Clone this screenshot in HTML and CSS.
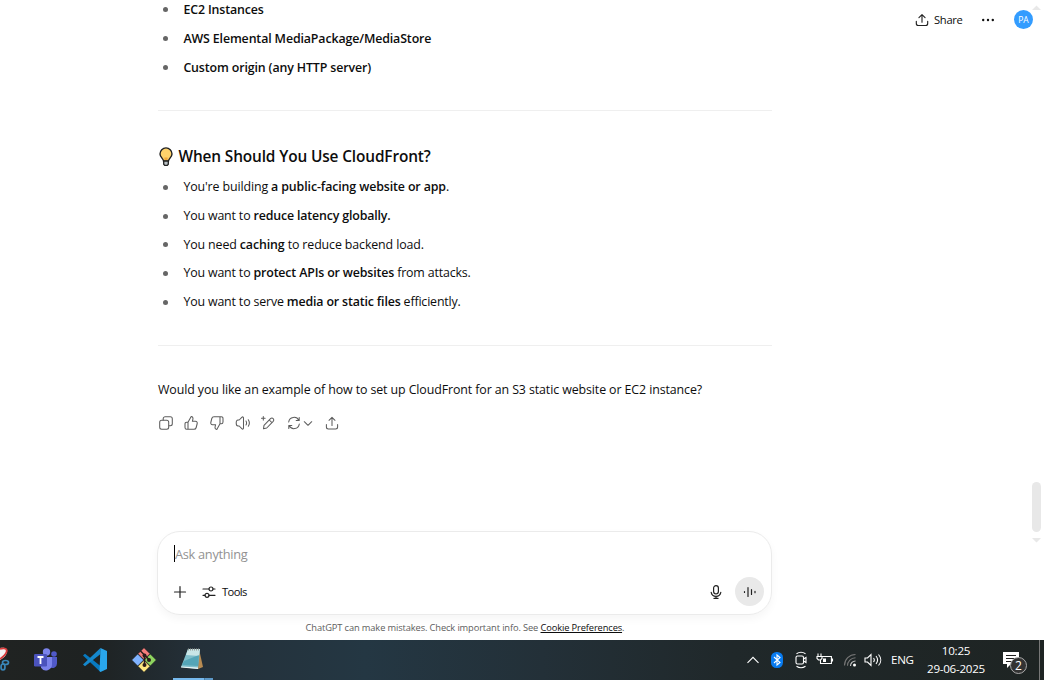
FILE: index.html
```html
<!DOCTYPE html>
<html lang="en">
<head>
<meta charset="utf-8">
<title>CloudFront</title>
<link rel="stylesheet" href="styles.css">
</head>
<body>
<div class="screen">
  <div class="page">
    <main class="thread">
      <ul class="list origins">
        <li><b>EC2 Instances</b></li>
        <li><b>AWS Elemental MediaPackage/MediaStore</b></li>
        <li><b>Custom origin (any HTTP server)</b></li>
      </ul>
      <hr class="rule">
      <h3 class="heading">
        <svg class="bulb" width="16" height="20" viewBox="0 0 16 20"><path d="M5.6 14.3C5.5 11.7 2 10.3 2 6.9a6 6 0 0 1 12 0c0 3.4-3.5 4.8-3.6 7.4z" fill="#ffd36b" stroke="#222" stroke-width="1.4"/><path d="M5.7 14h4.600v3.300L9.300 18.400H6.700L5.700 17.300z" fill="#b9c0c4" stroke="#222" stroke-width="1.300"/><path d="M6.400 10.500h3.200V13H6.400z" fill="#f2a93b"/></svg>
        <span>When Should You Use CloudFront?</span>
      </h3>
      <ul class="list uses">
        <li><span class="wide">You're building <b>a public-facing website or app</b>.</span></li>
        <li><span>You want to <b>reduce latency globally.</b></span></li>
        <li><span class="wide">You need <b>caching</b> to reduce backend load.</span></li>
        <li><span>You want to <b>protect APIs or websites</b> from attacks.</span></li>
        <li><span>You want to serve <b>media or static files</b> efficiently.</span></li>
      </ul>
      <hr class="rule">
      <p class="question">Would you like an example of how to set up CloudFront for an S3 static website or EC2 instance?</p>
      <div class="actions">
        <svg width="16" height="16" viewBox="0 0 16 16"><rect x="1.700" y="5.200" width="9" height="9" rx="2"/><path d="M5.200 5V3.700a2 2 0 0 1 2-2h5.100a2 2 0 0 1 2 2v5a2 2 0 0 1-2 2H11"/></svg>
        <svg class="like" width="16" height="16" viewBox="0 0 16 16"><path d="M5 7.200 8.200 1.600c1.600.2 2 1.300 1.700 2.500L9.400 6.300h3.100c1.300 0 2 1 1.700 2.200l-1 4c-.3 1.200-1 1.800-2.200 1.800H5zM5 7.200H3.700c-1.200 0-1.700.6-1.700 1.700v3.700c0 1.100.6 1.700 1.700 1.700H5"/></svg>
        <svg width="16" height="16" viewBox="0 0 16 16"><path d="M11 8.800 7.800 14.400c-1.600-.2-2-1.300-1.700-2.500l.5-2.200H3.500c-1.300 0-2-1-1.700-2.200l1-4c.3-1.200 1-1.800 2.200-1.800h6zM11 8.800h1.300c1.200 0 1.700-.6 1.700-1.700V3.400c0-1.100-.6-1.700-1.700-1.700H11"/></svg>
        <svg width="16" height="16" viewBox="0 0 16 16"><path d="M8.500 3v10c0 1.200-1 1.400-1.700.7L4.200 11H3c-1.200 0-1.800-.8-1.800-3S1.800 5 3 5h1.200l2.600-2.700c.7-.7 1.700-.5 1.700.7zM11 6c.7 1.200.7 2.800 0 4M13.300 4.700c1.300 2 1.300 4.600 0 6.600"/></svg>
        <svg width="16" height="16" viewBox="0 0 16 16"><path d="M3.500 13.800 4 10.300l6.500-6.600c.9-.9 2-.8 2.700-.1.800.8.800 1.800 0 2.700L6.700 13zM9.300 5l2.600 2.600M3.300 1.500v3.600M1.500 3.300h3.600"/></svg>
        <span class="retry"><svg width="16" height="16" viewBox="0 0 16 16"><path d="M2.700 7A5.400 5.400 0 0 1 12.900 5.400M13.200 2.500v3h-3M13.300 9A5.400 5.400 0 0 1 3.100 10.600M2.800 13.500v-3h3"/></svg><svg width="10" height="16" viewBox="0 0 10 16"><path d="m1.300 6.700 3.700 3.600 3.700-3.600"/></svg></span>
        <svg width="16" height="16" viewBox="0 0 16 16"><path d="M8 10.500V2.500M5 5.300 8 2.300l3 3M2.400 9.500V12c0 1.300.7 2 2 2h7.200c1.300 0 2-.7 2-2V9.500"/></svg>
      </div>
      <div class="composer">
        <div class="prompt"><i class="caret"></i>Ask anything</div>
        <div class="tools">
          <svg class="plus" width="14" height="14" viewBox="0 0 14 14"><path d="M7 1.500v11M1.500 7h11"/></svg>
          <svg class="sliders" width="14" height="14" viewBox="0 0 14 14"><path d="M1 4h6M11 4h2M1 10.300h2M7 10.300h6"/><circle cx="9" cy="4" r="2"/><circle cx="5" cy="10.300" r="2"/></svg>
          <span class="toolname">Tools</span>
          <svg class="mic" width="14" height="16" viewBox="0 0 14 16"><rect x="4.600" y="1.600" width="4.800" height="8.400" rx="2.400"/><path d="M2.200 8.300C2.700 11 4.500 12.300 7 12.300s4.300-1.300 4.800-4M7 12.300v2.100M5 14.400h4"/></svg>
          <span class="voice"><svg width="14" height="14" viewBox="0 0 14 14"><path d="M1.500 6.500v1M5 2.500v9M8.500 4.500v5M12 6.300v1.400"/></svg></span>
        </div>
      </div>
      <p class="note">ChatGPT can make mistakes. Check important info. See <u>Cookie Preferences</u>.</p>
    </main>
    <header class="topbar">
      <svg class="upload" width="14" height="14" viewBox="0 0 16 16"><path d="M8 10.500V2M4.500 5.200 8 1.900l3.500 3.300M1.500 9.500V12c0 1.600.7 2.300 2.300 2.300h8.400c1.600 0 2.300-.7 2.300-2.300V9.500"/></svg>
      <span class="share">Share</span>
      <svg class="dots" width="14" height="4" viewBox="0 0 14 4"><circle cx="2.200" cy="2" r="1.200"/><circle cx="7" cy="2" r="1.200"/><circle cx="11.800" cy="2" r="1.200"/></svg>
      <span class="avatar">PA</span>
    </header>
    <svg class="scrollbar" width="11" height="540" viewBox="0 0 11 540"><path d="m5.500 2.500 4.500 4.500H1zM1 535h9l-4.500 4.500z"/><rect x="1" y="479" width="9" height="50" rx="4.500"/></svg>
  </div>
  <footer class="taskbar">
    <div class="apps">
      <svg class="snip" width="10" height="26" viewBox="0 0 10 26"><path d="M0 1c5-1 8 1 7 4-.5 3-3 6-7 8z" fill="#f4f4f4"/><path d="M0 2c5-1.500 7.500 0 6.500 3S3 10 0 12" fill="none" stroke="#d83b3b" stroke-width="1.800"/><g fill="none" stroke="#3986b8" stroke-width="1.700"><ellipse cx="5.500" cy="15.500" rx="3" ry="2"/><ellipse cx="3" cy="20" rx="2" ry="3"/></g></svg>
      <svg class="teams" width="26" height="24" viewBox="0 0 26 24"><circle cx="21" cy="6" r="2.800" fill="#5059c9"/><circle cx="13.500" cy="4" r="3.700" fill="#7b83eb"/><path d="M17 9h7v6.500a4.500 4.500 0 0 1-7 3.800z" fill="#5059c9"/><path d="M8 9h11v7.500a6 6 0 0 1-11 3.200z" fill="#7b83eb"/><rect x="1" y="6" width="13" height="12.500" rx="1.200" fill="#4b53bc"/><path class="tee" d="M4.500 9h6M7.500 9v7"/></svg>
      <svg class="code" width="26" height="26" viewBox="0 0 26 26"><path d="M1 8.500 3 6.700 18.500 19v6z" fill="#0879bf"/><path d="M1 17.500 3 19.300 18.500 7V1z" fill="#1588cd"/><path d="M18.500 1 25 4v18l-6.500 3-1-1z" fill="#29a6ec"/></svg>
      <svg class="git" width="26" height="26" viewBox="0 0 26 26"><g stroke="#222" stroke-width=".6"><path d="m13 .7 6 6-6 6-6-6z" fill="#f67d7b"/><path d="m6.700 7 6 6-6 6-6-6z" fill="#80b3ff"/><path d="m19.300 7 6 6-6 6-6-6z" fill="#8dd35f"/><path d="m13 13.300 6 6-6 6-6-6z" fill="#ffe680"/></g><path d="m9.500 4 4 4v11M13.500 8l5 5" stroke="#2b1b1b" stroke-width="1.500" fill="none"/><g fill="#2b1b1b"><circle cx="13.500" cy="8.500" r="2"/><circle cx="18" cy="13" r="2"/><circle cx="13.500" cy="18" r="2"/></g></svg>
      <span class="active"><svg width="24" height="24" viewBox="0 0 24 24"><path d="m19 2 4 18-5 2z" fill="#b88b52"/><path d="M8 2h12l-2 20-17-2z" fill="#7fbecb"/><path d="M8 2h12l-1 7-13-1z" fill="#c9e6e7"/><path d="m4 14 15-6-1 11-16-1z" fill="#4a9fb1" opacity=".8"/><path d="m1 19.500 17 1V22L1 20.500z" fill="#eaf4f4"/><path d="M8 2.500h12" stroke="#969c98" stroke-width="2" stroke-dasharray="1 1"/></svg></span><i class="group"></i>
    </div>
    <div class="tray">
      <svg width="14" height="10" viewBox="0 0 14 10"><path d="m1.500 7.800 5.500-5.500 5.500 5.500"/></svg>
      <svg class="bt" width="12" height="16" viewBox="0 0 12 16"><rect width="12" height="16" rx="5.500"/><path d="m3 5 6 5.500L6 13V3l3 2.500L3 11"/></svg>
      <svg class="meet" width="14" height="18" viewBox="0 0 14 18"><rect x="2" y="5" width="7.500" height="8" rx="1.500"/><path d="m9.500 8 2.500-1.500v5L9.500 10M2.500 2.700c2.500-1.600 6.500-1.600 9 0M2.500 15.300c2.500 1.600 6.500 1.600 9 0"/></svg>
      <svg class="battery" width="18" height="14" viewBox="0 0 18 14"><path d="M6 3.500h9.400v7H4.500V7M16.500 5.500v3M2 .5v3M5 .5v3M1 3.500h5v2L4.500 7h-2L1 5.500z"/><path d="M7 5.500h3v3.500H7z" fill="#fff" stroke="none"/></svg>
      <svg class="wifi" width="14" height="14" viewBox="0 0 14 14"><path d="M1.500 12.500a11 11 0 0 1 11-11M4.500 12.800a8 8 0 0 1 8-8"/><path class="lit" d="M7.500 13a5 5 0 0 1 5-5"/><circle cx="11.500" cy="12" r="1.500"/></svg>
      <svg class="sound" width="18" height="14" viewBox="0 0 18 14"><path d="M1 5h2.500l3.500-3.500v11L3.500 9H1zM9.500 5c1 1.200 1 2.800 0 4M12 3c2 2.500 2 5.500 0 8M14.500 1.500c3 3.300 3 7.700 0 11"/></svg>
      <span class="lang">ENG</span>
      <span class="clock"><span>10:25</span><span>29-06-2025</span></span>
      <span class="notify"><svg width="18" height="18" viewBox="0 0 18 18"><path class="bubble" d="M1 1h16v12H9l-4 4v-4H1z"/><path class="lines" d="M4 4.500h10M4 7.500h10M4 10.500h6"/></svg><span class="count">2</span></span>
      <i class="peek"></i>
    </div>
  </footer>
</div>
</body>
</html>
```

FILE: styles.css
```css
* { box-sizing: border-box; }
body { margin: 0; font-family: "Open Sans", "Noto Sans", sans-serif; color: #0d0d0d; background: #fff; }
svg { display: block; flex: none; fill: none; }
b { font-weight: 600; }
p, h3, ul { margin: 0; padding: 0; }
.screen { width: 1044px; height: 680px; overflow: hidden; display: flex; flex-direction: column; }
.page { height: 640px; display: flex; }
.thread { width: 614px; margin-left: 158px; flex: none; }
.list { list-style: none; font-size: 12.4px; line-height: 28.8px; letter-spacing: -.16px; }
.list li { height: 28.8px; display: flex; align-items: center; white-space: pre; }
.list li::before { content: ""; width: 5px; height: 5px; border-radius: 50%; background: #666; margin: 0 15.4px 0 5px; }
.wide { letter-spacing: -.12px; }
.origins { margin-top: -5px; letter-spacing: -.13px; }
.rule { border: 0; height: 1px; background: #efefef; margin: 0; }
.origins li { height: 29px; line-height: 29px; }
.origins + .rule { margin-top: 28px; }
.heading { display: flex; align-items: center; height: 24px; margin-top: 34px; font-size: 15.4px; font-weight: 600; letter-spacing: -.13px; white-space: nowrap; gap: 4.5px; }
.heading span { line-height: 20px; padding-bottom: 1px; }
.uses { margin-top: 4px; }
.uses + .rule { margin-top: 28px; }
.question { margin-top: 32px; line-height: 24px; font-size: 12.4px; letter-spacing: -.1px; white-space: nowrap; }
.actions { margin-top: 12px; height: 18px; display: flex; align-items: center; gap: 9.6px; }
.actions svg { stroke: #5d5d5d; stroke-width: 1.05; stroke-linecap: round; stroke-linejoin: round; }
.actions .like { margin: 0 .5px 0 -.5px; }
.retry { display: flex; gap: 1px; margin-right: 1px; }
.composer { margin-top: 99px; height: 84px; border: 1px solid #ebebeb; border-radius: 23px; box-shadow: 0 4px 8px rgba(0,0,0,.04); margin-left: -1px; }
.prompt { display: flex; align-items: center; height: 20px; margin: 12px 0 0 16px; font-size: 12.8px; letter-spacing: -.3px; color: #929292; }
.caret { width: 1px; height: 17px; background: #000; }
.tools { display: flex; align-items: center; height: 30px; margin: 13px 7px 0 15px; }
.tools svg { stroke: #222; stroke-width: 1.2; stroke-linecap: round; }
.sliders { margin-left: 15px; }
.toolname { margin-left: 6px; font-size: 11.2px; letter-spacing: -.6px; }
.mic { margin-left: auto; margin-right: 12px; }
.voice { width: 29px; height: 29px; border-radius: 50%; background: #e9e9e9; display: grid; place-items: center; }
.note { text-align: center; font-size: 9.3px; letter-spacing: -.12px; line-height: 16px; margin-top: 5px; color: #5d5d5d; white-space: nowrap; }
.note u { color: #0d0d0d; text-underline-offset: 1px; }
.topbar { display: flex; align-items: center; height: 39px; margin-left: 143px; width: 118px; flex: none; }
.upload { stroke: #222; stroke-width: 1.3; stroke-linecap: round; stroke-linejoin: round; }
.share { font-size: 11.2px; font-weight: 500; letter-spacing: -.3px; margin-left: 5px; width: 46px; }
.dots { fill: #111; margin-left: 1px; }
.avatar { margin-left: auto; width: 19px; height: 19px; border-radius: 50%; background: #339cff; color: #fff; font-size: 8.5px; font-weight: 500; display: grid; place-items: center; }
.scrollbar { margin: 3px 2px 0 auto; fill: #e8e8e8; transform: translateX(-2px); }
.taskbar { height: 40px; display: flex; justify-content: space-between; color: #fff; background: linear-gradient(90deg, #202322 0, #1e2222 9%, #243039 19%, #243743 35%, #233038 52%, #20282a 70%, #1e2423 100%); }
.apps { display: flex; align-items: center; }
.teams { margin-left: 23px; }
.tee { stroke: #fff; stroke-width: 1.8; }
.code { margin-left: 23px; }
.git { margin-left: 23px; }
.active { margin-left: 16px; width: 31px; height: 40px; border-bottom: 2px solid #76b9ed; display: grid; place-items: center; padding-left: 6px; }
.group { width: 9px; height: 2px; align-self: flex-end; background: linear-gradient(90deg, #4b7fa7 1px, #5d99c8 1px); }
.tray { display: flex; align-items: center; }
.tray svg { stroke: #fff; stroke-width: 1.1; }
.bt { margin-left: 11px; }
.bt rect { fill: #087bf0; stroke: none; }
.meet { margin-left: 11px; }
.battery { margin-left: 8px; }
.tray .wifi { margin-left: 9px; stroke: #777; }
.wifi .lit { stroke: #ccc; }
.wifi circle { fill: #fff; stroke: none; }
.sound { margin-left: 7px; }
.lang { margin-left: 9px; font-size: 11.6px; line-height: 16px; padding-bottom: 1px; width: 27px; letter-spacing: -.3px; }
.clock { display: flex; flex-direction: column; align-items: center; width: 76px; font-size: 11.6px; line-height: 18px; letter-spacing: -.25px; }
.notify { position: relative; width: 37px; height: 18px; margin-left: 8px; }
.tray .bubble { fill: #fff; stroke: none; }
.tray .lines { stroke: #222; }
.count { position: absolute; left: 8px; top: 6px; width: 17px; height: 17px; border-radius: 50%; border: 1px solid #aaa; background: #333; font-size: 12px; line-height: 15px; text-align: center; }
.peek { width: 5px; height: 40px; border-left: 1px solid #777; }
```
